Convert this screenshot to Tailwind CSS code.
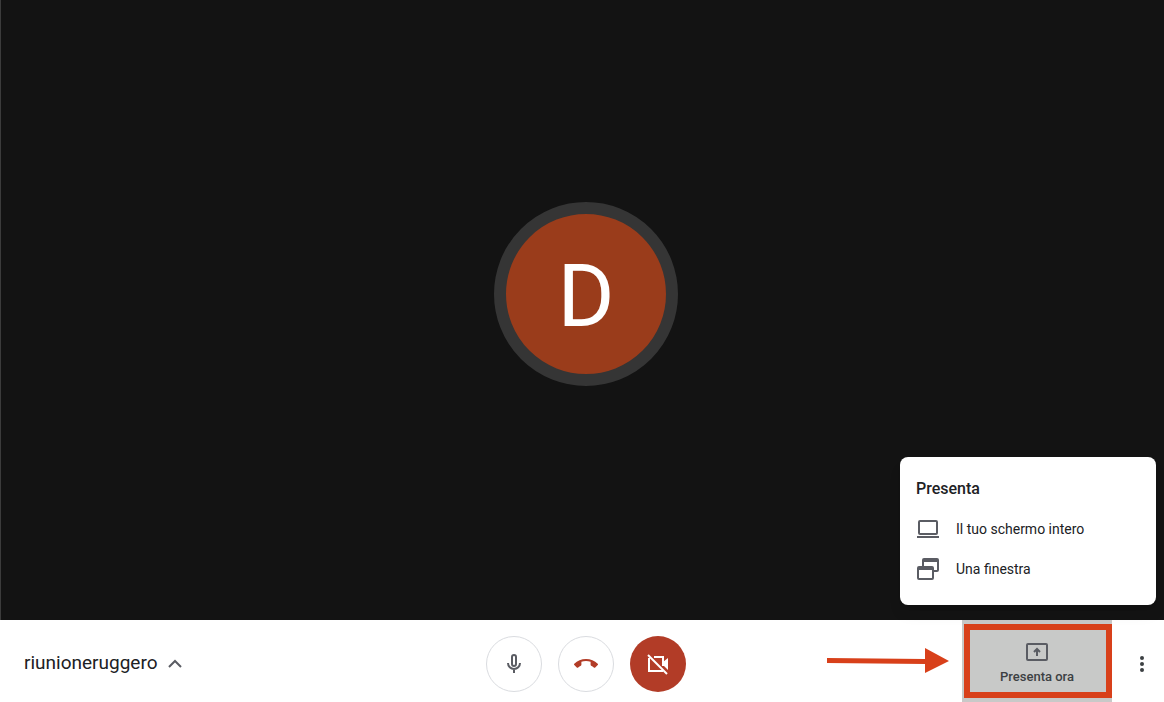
<!DOCTYPE html>
<html lang="it">
<head>
    <meta charset="UTF-8">
    <meta name="viewport" content="width=device-width, initial-scale=1.0">
    <title>riunioneruggero</title>
    <script src="https://cdn.jsdelivr.net/npm/@tailwindcss/browser@4"></script>
</head>
<body class="relative flex flex-col h-screen overflow-hidden bg-white font-[Roboto,sans-serif] text-[#202124]">
    <!-- Video area -->
    <main class="flex flex-1 items-center justify-center pl-[7px] pb-8 bg-[#131313] border-l border-[#3c3c3c]">
        <div class="flex items-center justify-center size-46 pt-1 rounded-full border-12 border-[#353535] bg-[#9a3c1b] text-white text-[87px] leading-none">D</div>
    </main>

    <!-- Present menu -->
    <section class="absolute right-2 bottom-[97px] w-64 h-37 px-4 pt-5 rounded-lg bg-white shadow-lg">
        <h2 class="text-base leading-6 font-medium">Presenta</h2>
        <button type="button" class="flex items-center gap-4 w-full h-10 mt-2 text-sm">
            <svg class="size-6 text-[#5a5c63]" viewBox="0 0 24 24" fill="none" stroke="currentColor" stroke-width="2">
                <rect x="3" y="4" width="18" height="13" rx="1"/>
                <path d="M1 20h22"/>
            </svg>
            Il tuo schermo intero
        </button>
        <button type="button" class="flex items-center gap-4 w-full h-10 text-sm">
            <svg class="size-6 text-[#5a5c63]" viewBox="0 0 24 24" fill="currentColor">
                <path fill-rule="evenodd" d="M8 1h13a2 2 0 0 1 2 2v10a2 2 0 0 1-2 2h-3v-2h3V5H8v4H6V3a2 2 0 0 1 2-2z"/>
                <path fill-rule="evenodd" d="M3 9h13a2 2 0 0 1 2 2v10a2 2 0 0 1-2 2H3a2 2 0 0 1-2-2V11a2 2 0 0 1 2-2zm0 4v8h13v-8z"/>
            </svg>
            Una finestra
        </button>
    </section>

    <!-- Bottom bar -->
    <footer class="grid grid-cols-[1fr_auto_1fr] h-[82px]">
        <div class="pl-6 pt-7">
            <button type="button" class="flex items-center gap-[6px] text-[19px] leading-[30px]">
                riunioneruggero
                <svg class="size-6 text-[#5a5c63]" viewBox="0 0 24 24" fill="none" stroke="currentColor" stroke-width="2">
                    <path d="M6 16l6-6 6 6"/>
                </svg>
            </button>
        </div>

        <div class="flex gap-4 pt-4 pl-2">
            <button type="button" aria-label="Microfono" class="flex items-center justify-center size-14 rounded-full border border-[#dadce0]">
                <svg class="size-6 text-[#5a5c63]" viewBox="0 0 24 24" fill="none" stroke="currentColor" stroke-width="2">
                    <rect x="10" y="3" width="4" height="11" rx="2"/>
                    <path d="M6 11a6 6 0 0 0 12 0M12 17v4"/>
                </svg>
            </button>
            <button type="button" aria-label="Abbandona la chiamata" class="flex items-center justify-center size-14 rounded-full border border-[#dadce0]">
                <svg class="size-6 text-[#b23c27]" viewBox="0 0 24 24" fill="currentColor">
                    <path d="M12 9c-1.6 0-3.15.25-4.6.72v3.1c0 .39-.23.74-.56.9-.98.49-1.87 1.12-2.66 1.85-.18.18-.43.28-.7.28-.28 0-.53-.11-.71-.29L.29 13.08a.956.956 0 0 1-.29-.7c0-.28.11-.53.29-.71C3.34 8.78 7.46 7 12 7s8.66 1.78 11.71 4.67c.18.18.29.43.29.71 0 .28-.11.53-.29.71l-2.48 2.48c-.18.18-.43.29-.71.29-.27 0-.52-.11-.7-.28a11.27 11.27 0 0 0-2.67-1.85.996.996 0 0 1-.56-.9v-3.1C15.15 9.25 13.6 9 12 9z"/>
                </svg>
            </button>
            <button type="button" aria-label="Attiva videocamera" class="flex items-center justify-center size-14 rounded-full bg-[#b23c27]">
                <svg class="size-6 text-white" viewBox="0 0 24 24" fill="none" stroke="currentColor" stroke-width="2">
                    <path d="M8 5h9v9M3 6v13h14"/>
                    <path d="M17 10l5-4v12l-5-5z" fill="currentColor" stroke="none"/>
                    <path d="M2 3l19 19"/>
                </svg>
            </button>
        </div>

        <div class="flex justify-end">
            <svg class="w-[122px] h-[26px] mt-7 mr-[13px]" viewBox="0 0 122 26" fill="#d8401a">
                <path d="M0 10l98 1V0l24 13-24 12V16L0 15z"/>
            </svg>
            <button type="button" class="w-[150px] pl-[2px] py-1 bg-[#c8c9c8]">
                <span class="flex flex-col items-center justify-center gap-[3px] h-full pt-1 pr-[2px] border-6 border-[#d8401a] text-[13px] leading-5 font-medium text-[#3c4043]">
                    <svg class="size-6 text-[#5a5c63]" viewBox="0 0 24 24" fill="none" stroke="currentColor" stroke-width="2">
                        <rect x="2" y="4" width="20" height="16" rx="1"/>
                        <path d="M12 16V10M9 12l3-3 3 3"/>
                    </svg>
                    Presenta ora
                </span>
            </button>
            <button type="button" aria-label="Altre opzioni" class="w-[52px] pl-[18px] pt-[6px]">
                <svg class="size-6 text-[#3c4043]" viewBox="0 0 24 24" fill="currentColor">
                    <circle cx="12" cy="6" r="2"/>
                    <circle cx="12" cy="12" r="2"/>
                    <circle cx="12" cy="18" r="2"/>
                </svg>
            </button>
        </div>
    </footer>
</body>
</html>
